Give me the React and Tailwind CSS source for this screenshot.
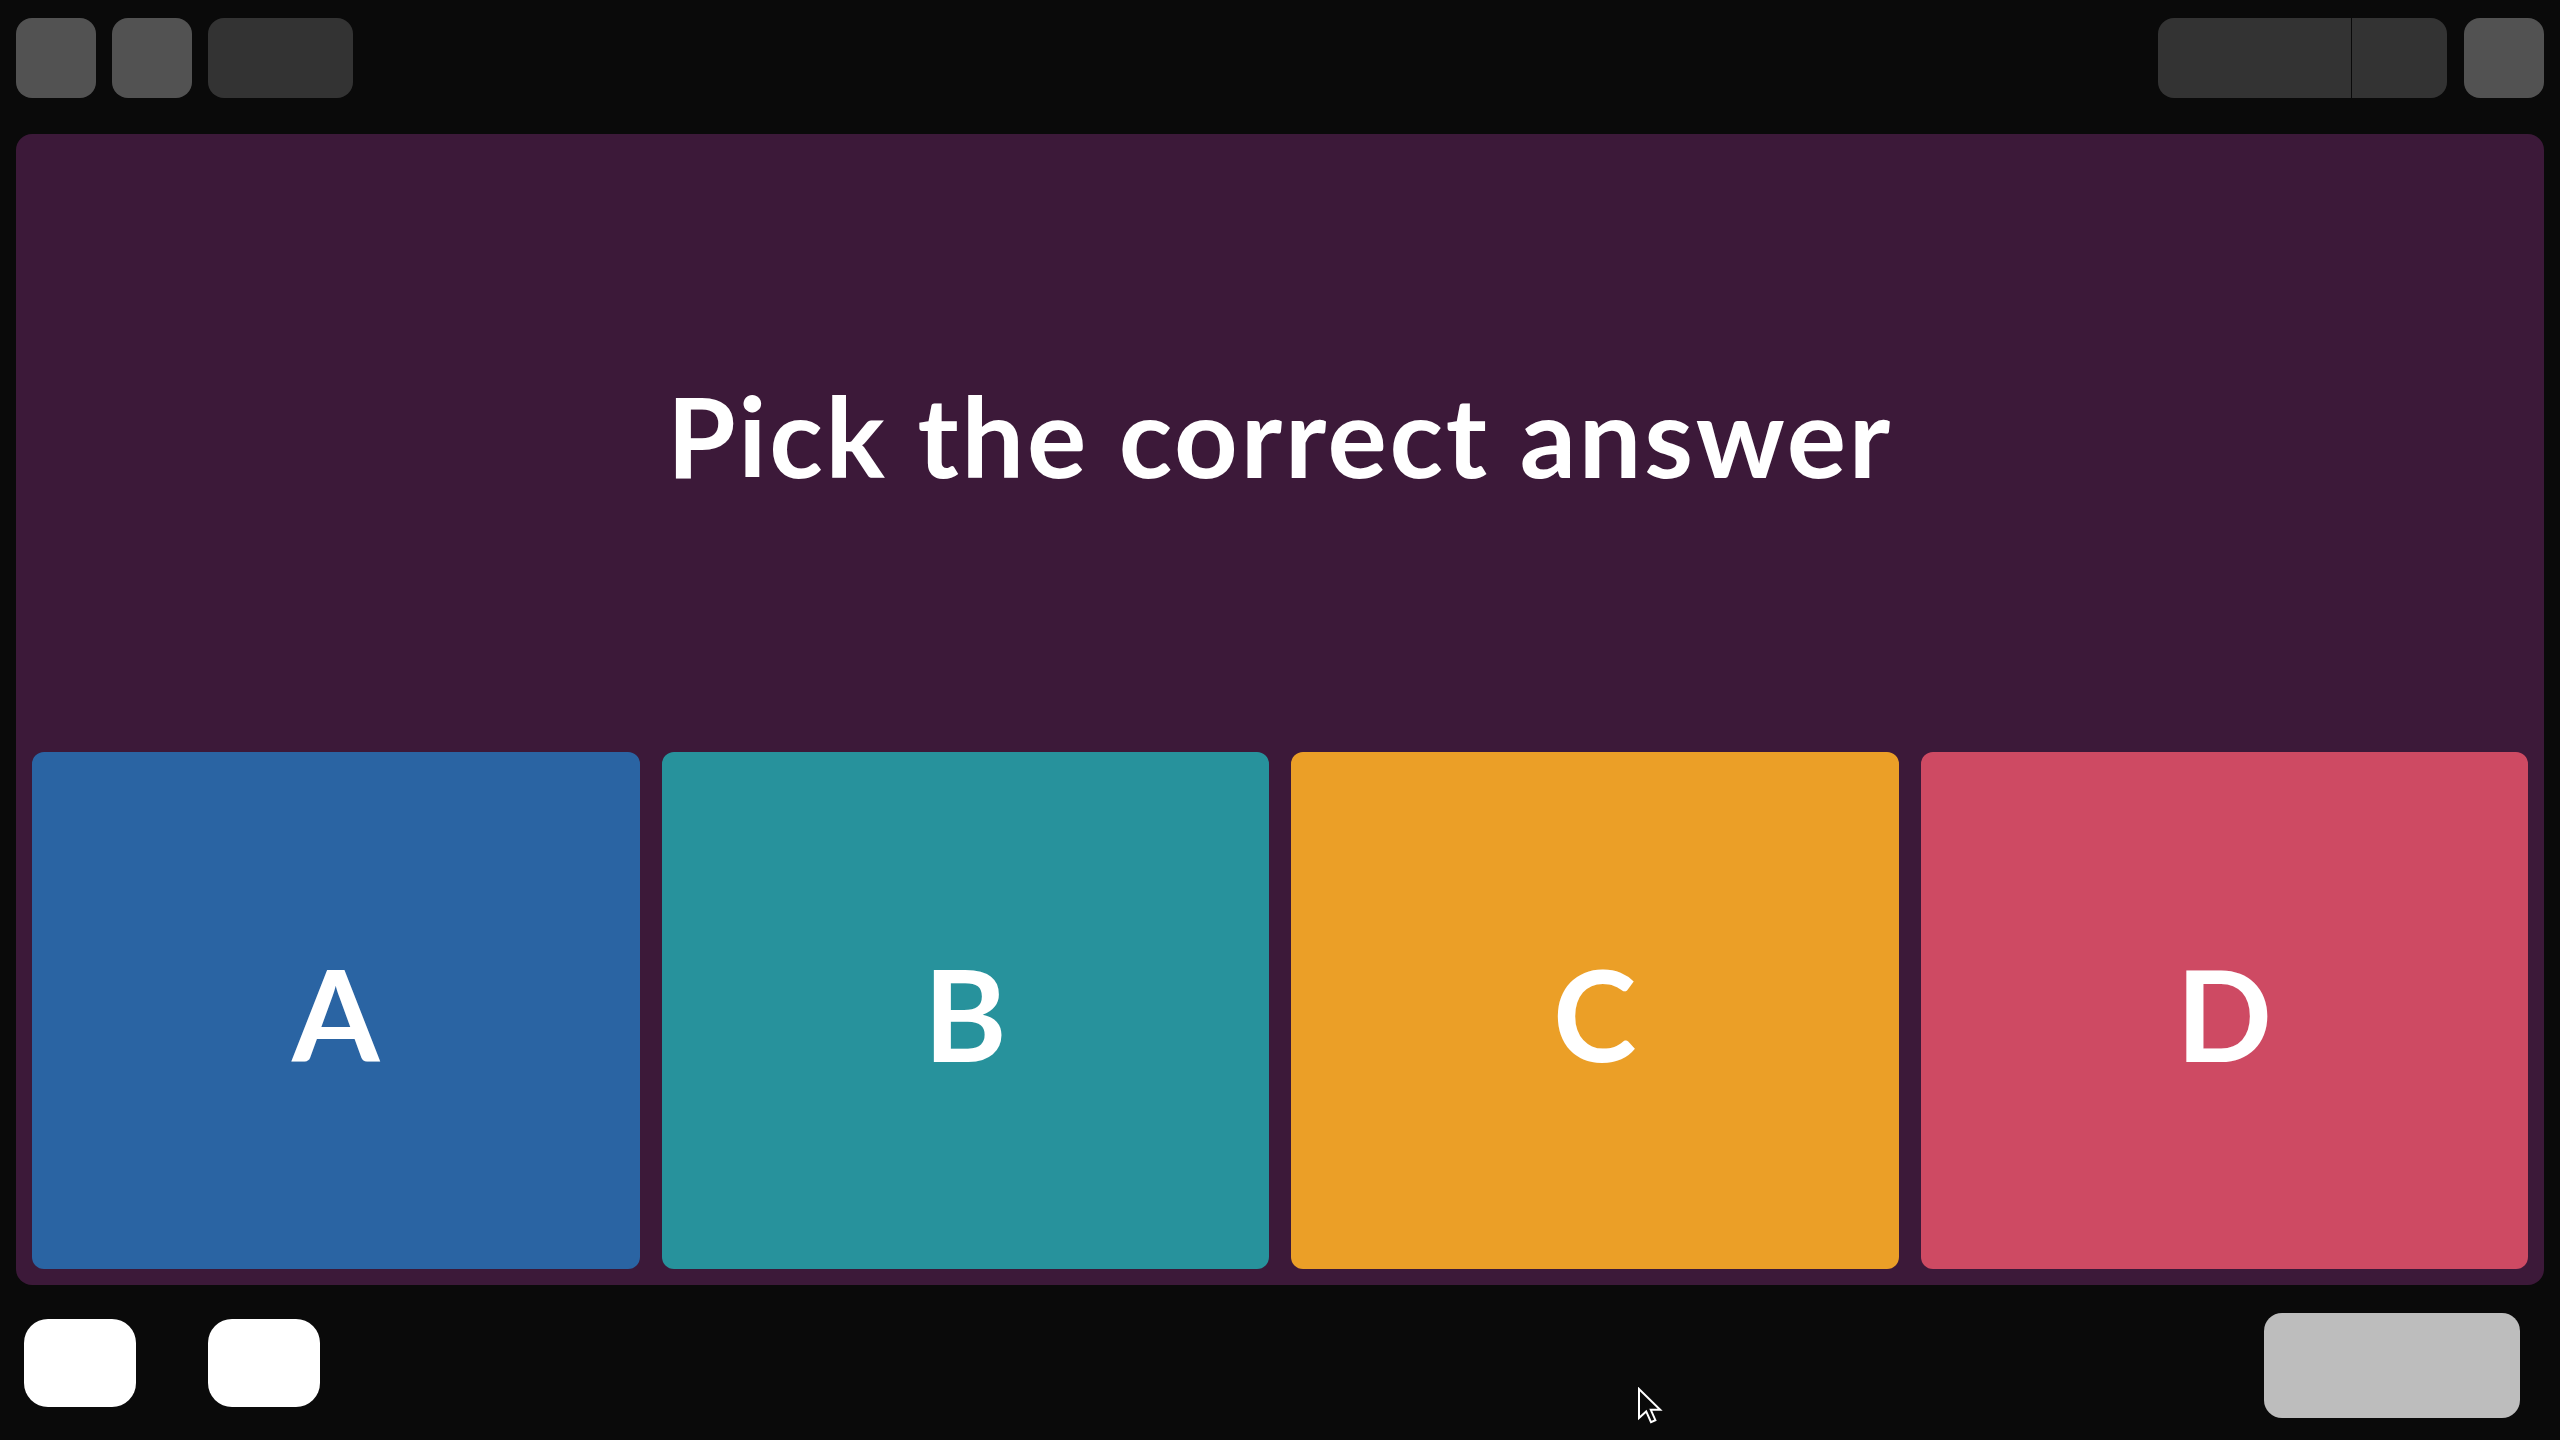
import React from 'react'

const answers = [
  { key: 'A', bg: 'bg-[#2a64a3]' },
  { key: 'B', bg: 'bg-[#27929c]' },
  { key: 'C', bg: 'bg-[#eb9f27]' },
  { key: 'D', bg: 'bg-[#ce4a63]' },
]

function Cursor() {
  return (
    <svg
      className="absolute left-[1637px] top-[1387px]"
      width="26"
      height="38"
      viewBox="0 0 13 19"
    >
      <path
        d="M1 1 L1 15.5 L4.6 12.2 L7 17.6 L9.2 16.6 L6.9 11.4 L11.6 11.4 Z"
        fill="#0a0a0a"
        stroke="#ffffff"
        strokeWidth="1"
        strokeLinejoin="miter"
      />
    </svg>
  )
}

export default function App() {
  return (
    <div className="relative flex h-[1440px] w-[2560px] flex-col overflow-hidden bg-[#0a0a0a] font-['Lato',sans-serif]">
      {/* top toolbar */}
      <div className="flex h-[134px] shrink-0 items-start justify-between px-4 pt-[18px]">
        <div className="flex gap-4">
          <div className="h-20 w-20 rounded-2xl bg-[#525252]" />
          <div className="h-20 w-20 rounded-2xl bg-[#525252]" />
          <div className="h-20 w-[145px] rounded-2xl bg-[#333333]" />
        </div>
        <div className="flex gap-[17px]">
          <div className="flex h-20 overflow-hidden rounded-2xl">
            <div className="h-full w-[193px] bg-[#333333]" />
            <div className="h-full w-px bg-[#0a0a0a]" />
            <div className="h-full w-[95px] bg-[#333333]" />
          </div>
          <div className="h-20 w-20 rounded-2xl bg-[#525252]" />
        </div>
      </div>

      {/* question panel */}
      <div className="mx-4 flex h-[1151px] shrink-0 flex-col rounded-2xl bg-[#3c1939] p-4">
        <div className="flex flex-1 items-center justify-center pb-[32px]">
          <h1 className="text-[111px] font-bold leading-none tracking-[2.8px] text-white">
            Pick the correct answer
          </h1>
        </div>
        <div className="grid h-[517px] grid-cols-4 gap-[22px]">
          {answers.map((a) => (
            <div
              key={a.key}
              className={`flex items-center justify-center rounded-xl ${a.bg}`}
            >
              <span className="mt-[6px] text-[126px] font-bold leading-none text-white">{a.key}</span>
            </div>
          ))}
        </div>
      </div>

      {/* bottom bar */}
      <div className="flex flex-1 items-center justify-between pl-6 pr-10">
        <div className="flex gap-[72px]">
          <div className="h-[88px] w-[112px] rounded-3xl bg-white" />
          <div className="h-[88px] w-[112px] rounded-3xl bg-white" />
        </div>
        <div className="mt-[6px] h-[105px] w-[256px] rounded-[18px] bg-[#bdbdbd]" />
      </div>

      <Cursor />
    </div>
  )
}
